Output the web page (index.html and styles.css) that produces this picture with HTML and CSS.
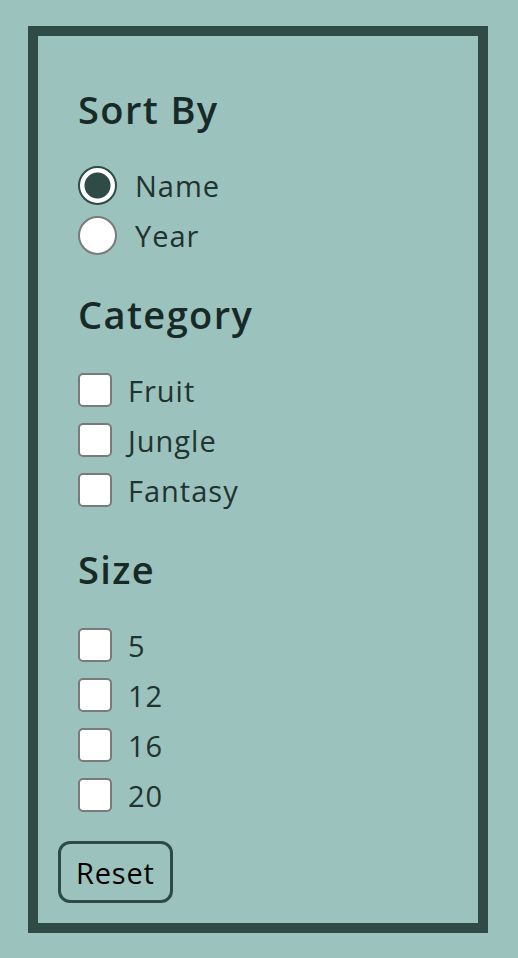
FILE: index.html
```html
<!DOCTYPE html>
<html lang="en">
  <head>
    <meta charset="UTF-8" />
    <meta name="viewport" content="width=device-width, initial-scale=1.0" />
    <title>Filters</title>
    <link rel="stylesheet" href="styles.css">
  </head>
  <body>
    <form class="panel">
      <div class="section">
        <h2>Sort By</h2>
        <label class="option radio">
          <input type="radio" name="sort" value="name" checked />
          <span>Name</span>
        </label>
        <label class="option radio">
          <input type="radio" name="sort" value="year" />
          <span>Year</span>
        </label>
      </div>

      <div class="section">
        <h2>Category</h2>
        <label class="option">
          <input type="checkbox" name="category" value="fruit" />
          <span>Fruit</span>
        </label>
        <label class="option">
          <input type="checkbox" name="category" value="jungle" />
          <span>Jungle</span>
        </label>
        <label class="option">
          <input type="checkbox" name="category" value="fantasy" />
          <span>Fantasy</span>
        </label>
      </div>

      <div class="section">
        <h2>Size</h2>
        <label class="option">
          <input type="checkbox" name="size" value="5" />
          <span>5</span>
        </label>
        <label class="option">
          <input type="checkbox" name="size" value="12" />
          <span>12</span>
        </label>
        <label class="option">
          <input type="checkbox" name="size" value="16" />
          <span>16</span>
        </label>
        <label class="option">
          <input type="checkbox" name="size" value="20" />
          <span>20</span>
        </label>
      </div>

      <button type="reset" class="reset">Reset</button>
    </form>
  </body>
</html>
```

FILE: styles.css
```css
body {
  margin: 0;
  background-color: #9bc2bc;
  font-family: "Open Sans", "Noto Sans", sans-serif;
  color: #1f3330;
}
.panel {
  margin: 26px 30px 25px 28px;
  padding: 19px 20px 20px;
  border: 10px solid #2e4b45;
}
.section {
  padding: 0 20px;
}
.section h2 {
  margin: 30px 0 27px;
  font-size: 38px;
  font-weight: 600;
  line-height: 48px;
  letter-spacing: 1.4px;
  color: #172a27;
}
.option {
  display: flex;
  align-items: center;
  gap: 16px;
  height: 50px;
  font-size: 29px;
  letter-spacing: 1px;
}
.option.radio {
  gap: 18px;
}
.option input {
  appearance: none;
  margin: 0;
  background: #fff;
  flex-shrink: 0;
}
.option input[type="radio"] {
  width: 39px;
  height: 39px;
  border: 2px solid #7a7a7a;
  border-radius: 50%;
}
.option input[type="radio"]:checked {
  border-color: #2e4b45;
  background: radial-gradient(circle, #2e4b45 0 12.5px, #fff 13.5px);
}
.option input[type="checkbox"] {
  width: 34px;
  height: 34px;
  border: 2px solid #7a7a7a;
  border-radius: 5px;
}
.reset {
  margin-top: 21px;
  height: 62px;
  padding: 0 15px;
  font-family: inherit;
  font-size: 29px;
  letter-spacing: 0.8px;
  color: #000;
  background: transparent;
  border: 3px solid #2e4b45;
  border-radius: 12px;
}
```
